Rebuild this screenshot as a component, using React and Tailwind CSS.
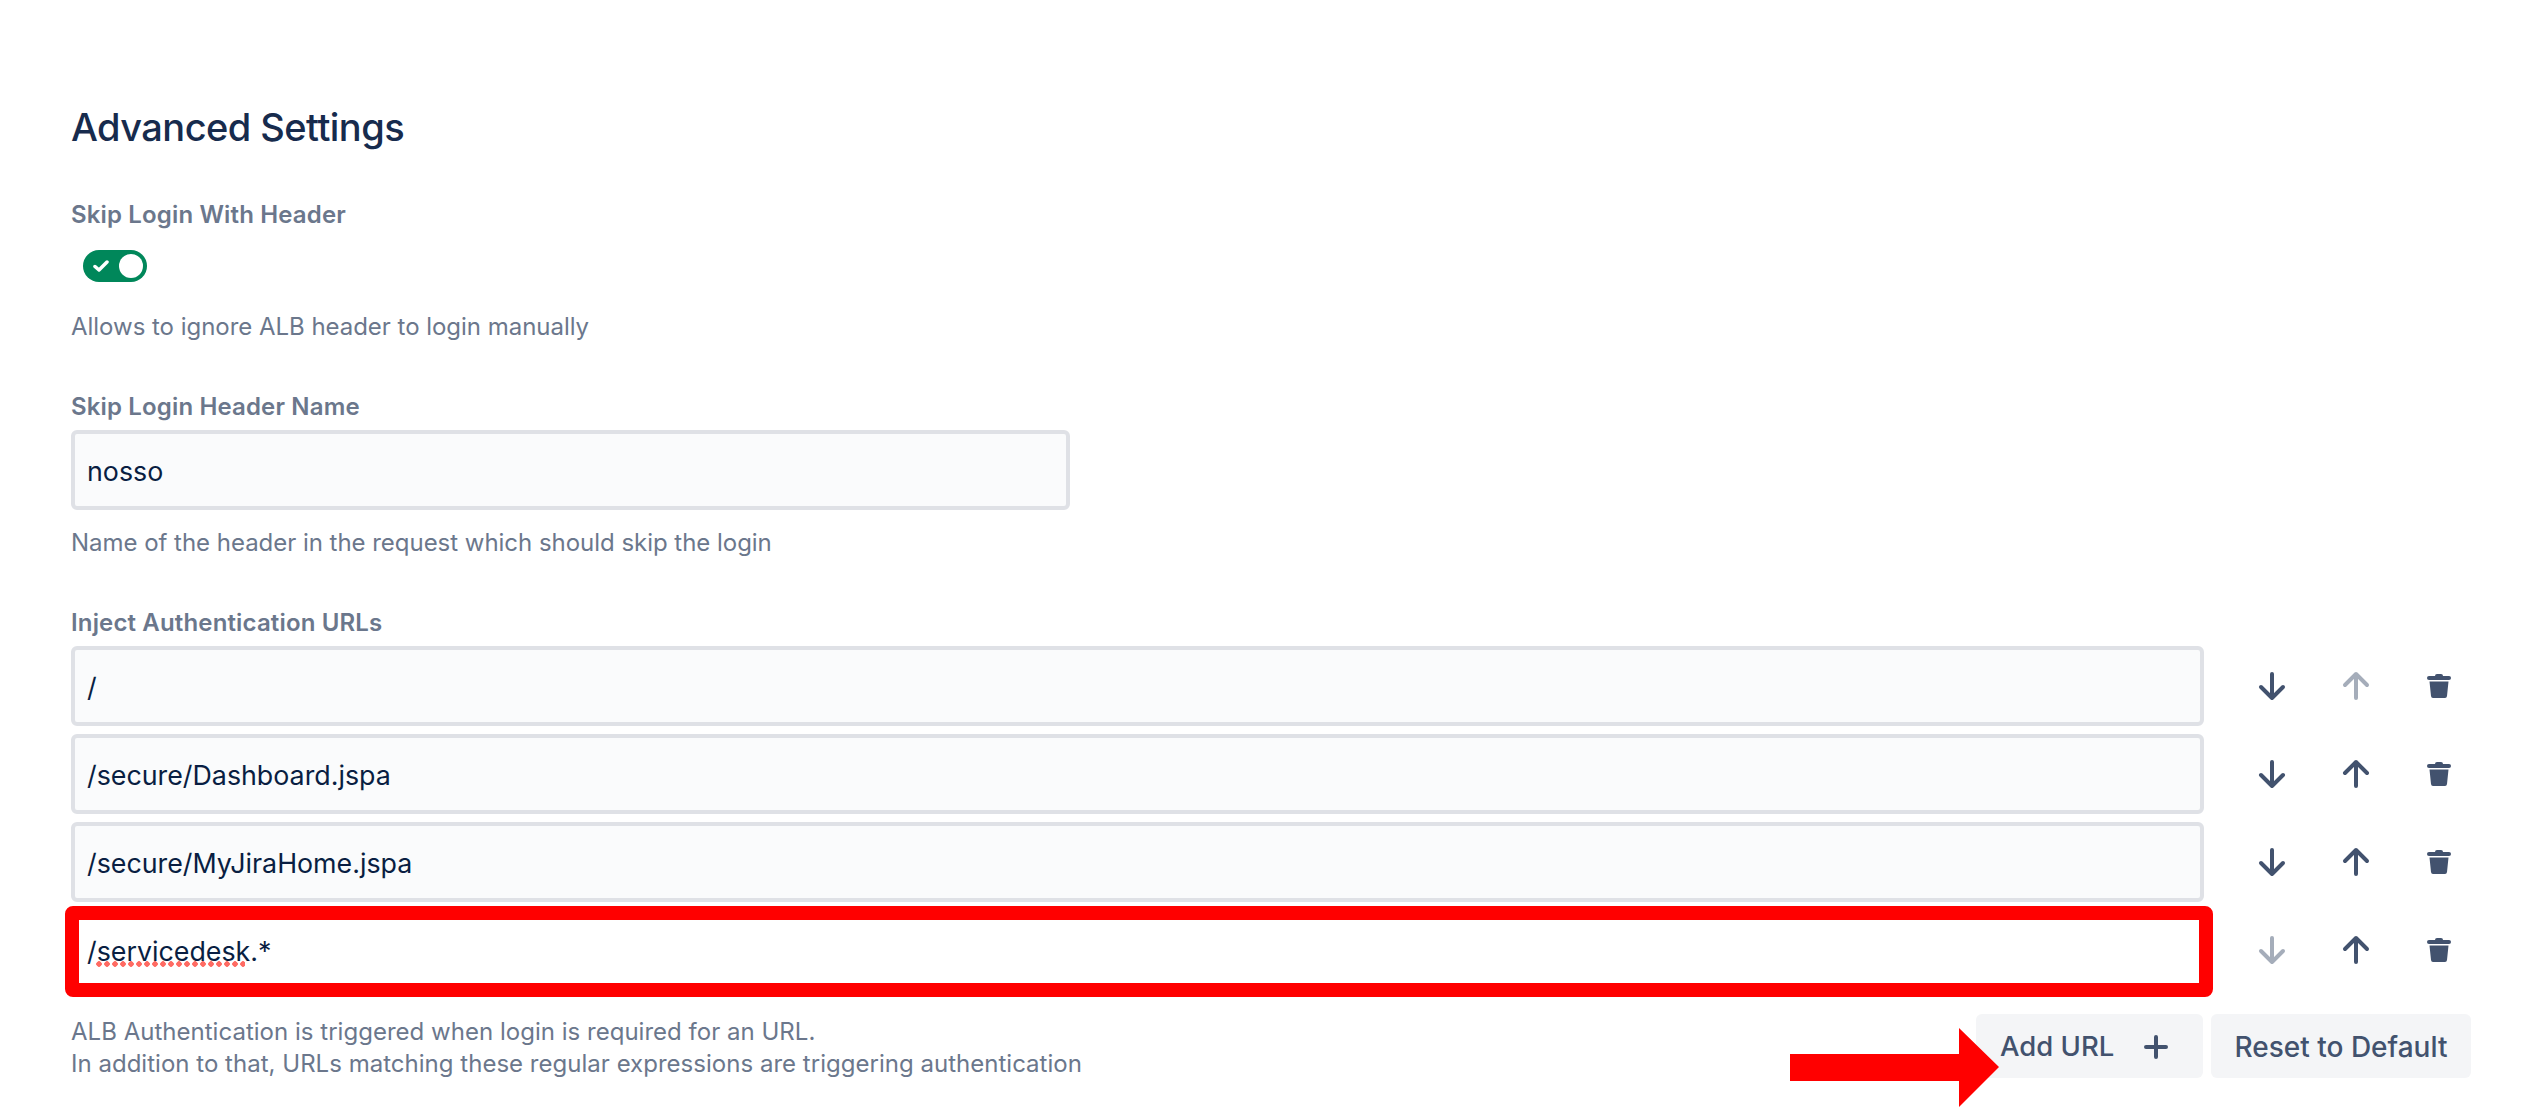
const ArrowIcon = ({ dir, disabled }) => (
  <button className={`flex h-8 w-[64px] items-center justify-center ${disabled ? "text-[#a5adba]" : "text-[#42526e]"}`}>
    <svg width="32" height="32" viewBox="0 0 32 32" fill="none" stroke="currentColor" strokeWidth="4" strokeLinecap="round" strokeLinejoin="round">
      {dir === "down" ? <path d="M16 4V28M5 17L16 28L27 17" /> : <path d="M16 28V4M5 15L16 4L27 15" />}
    </svg>
  </button>
);

const TrashIcon = () => (
  <button className="flex h-8 w-[64px] items-center justify-center text-[#42526e]">
    <svg width="32" height="32" viewBox="0 0 32 32" fill="currentColor">
      <rect x="4" y="6" width="24" height="4" rx="2" />
      <rect x="12" y="4" width="8" height="4" rx="2" />
      <path d="M6.5 11.5H25.5L24 26Q23.8 28 22 28H10Q8.2 28 8 26Z" />
    </svg>
  </button>
);

const inputBase =
  "h-20 w-full rounded-md border-4 border-[#dfe1e6] px-3 pt-0.5 text-[26.8px] text-[#091e42] outline-none";

const Row = ({ value, downOff, upOff, marked }) => (
  <div className="flex items-center">
    <div className="relative flex-1">
      <input readOnly value={value} className={`${inputBase} ${marked ? "bg-white" : "bg-[#fafbfc]"}`} />
      {marked && (
        <>
          <div className="pointer-events-none absolute -top-1 -right-[9px] -bottom-[7px] -left-1.5 rounded-lg border-[14px] border-[#ff0000]" />
          <div className="pointer-events-none absolute top-[51px] left-6 h-1.5 w-[150px] bg-[radial-gradient(circle,#ff6b63_2.5px,transparent_3px)] bg-[length:8px_6px]" />
        </>
      )}
    </div>
    <div className="ml-[36px] flex w-[231px] justify-between">
      <ArrowIcon dir="down" disabled={downOff} />
      <ArrowIcon dir="up" disabled={upOff} />
      <TrashIcon />
    </div>
  </div>
);

const Label = ({ children, className = "" }) => (
  <div className={`text-[24px] leading-8 font-semibold tracking-[0.15px] text-[#6b778c] ${className}`}>{children}</div>
);

const Help = ({ children, className = "" }) => (
  <div className={`text-[24px] leading-8 text-[#6b778c] ${className}`}>{children}</div>
);

export default function App() {
  return (
    <div className="h-[1114px] w-[2534px] overflow-hidden bg-white pt-[107px] pl-[71px] font-['Inter',sans-serif]">
      <div className="w-[2400px]">
        <h1 className="text-[38px] leading-10 font-medium tracking-[-0.55px] text-[#172b4d]">Advanced Settings</h1>

        <Label className="mt-[52px]">Skip Login With Header</Label>
        <div className="mt-[19px] ml-3 flex h-8 w-16 items-center rounded-full bg-[#00875a] pr-1 pl-2.5">
          <svg width="16" height="12" viewBox="0 0 16 12" fill="none" stroke="white" strokeWidth="3.5" strokeLinecap="round" strokeLinejoin="round">
            <path d="M2 6.5L6 10L14 2" />
          </svg>
          <div className="ml-auto h-6 w-6 rounded-full bg-white" />
        </div>
        <Help className="mt-[29px] tracking-[-0.03px]">Allows to ignore ALB header to login manually</Help>

        <Label className="mt-12">Skip Login Header Name</Label>
        <input readOnly value="nosso" className={`${inputBase} mt-[7px] block !w-[999px] bg-[#fafbfc]`} />
        <Help className="mt-[17px] tracking-[-0.03px]">Name of the header in the request which should skip the login</Help>

        <Label className="mt-12">Inject Authentication URLs</Label>
        <div className="mt-[7px] flex flex-col gap-2">
          <Row value="/" upOff />
          <Row value="/secure/Dashboard.jspa" />
          <Row value="/secure/MyJiraHome.jspa" />
          <Row value="/servicedesk.*" downOff marked />
        </div>

        <div className="relative mt-6 flex justify-between">
          <Help className="pt-0.5 tracking-[0.02px]">
            ALB Authentication is triggered when login is required for an URL.
            <br />
            In addition to that, URLs matching these regular expressions are triggering authentication
          </Help>
          <div className="flex gap-2">
            <button className="flex h-16 w-[227px] items-center rounded-md bg-[#f4f5f7] pt-0.5 pl-6 text-[27.5px] font-medium text-[#42526e]">
              Add URL
              <svg className="ml-[30px]" width="24" height="24" viewBox="0 0 24 24" fill="none" stroke="currentColor" strokeWidth="4" strokeLinecap="round">
                <path d="M12 2V22M2 12H22" />
              </svg>
            </button>
            <button className="h-16 w-[260px] rounded-md bg-[#f4f5f7] pt-0.5 text-[28px] font-medium text-[#42526e]">
              Reset to Default
            </button>
          </div>
          <svg className="absolute top-[14px] left-[1719px]" width="210" height="79" viewBox="0 0 210 79">
            <path d="M0 26H169V0L209 39L169 79V53H0Z" fill="#ff0000" />
          </svg>
        </div>
      </div>
    </div>
  );
}
